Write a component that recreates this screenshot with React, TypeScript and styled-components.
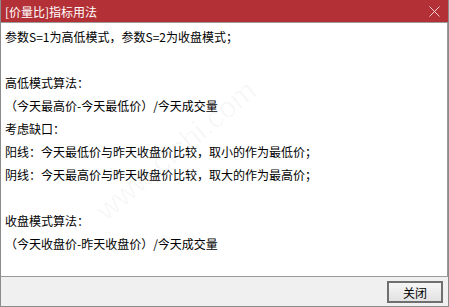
import React from "react";
import styled, { createGlobalStyle } from "styled-components";

const GlobalStyle = createGlobalStyle`
  html, body {
    margin: 0;
    padding: 0;
    background: #f0f0f0;
  }
  body {
    font-family: "Microsoft YaHei", "Noto Sans CJK SC", "Liberation Sans", sans-serif;
  }
`;

const Window = styled.div`
  width: 449px;
  height: 307px;
  box-sizing: border-box;
  display: flex;
  flex-direction: column;
  background: #f0f0f0;
  border-left: 1px solid #8c8c8c;
  border-right: 1px solid #8c8c8c;
  border-bottom: 1px solid #8c8c8c;
  overflow: hidden;
`;

const TitleBar = styled.div`
  height: 22px;
  flex: none;
  display: flex;
  align-items: center;
  justify-content: space-between;
  background: #b33036;
  color: #fff;
  font-size: 12px;
  padding: 0 9px 0 5px;
  margin: 0 -1px;
`;

const Content = styled.div`
  position: relative;
  flex: 1;
  background: #fff;
  border-top: 1px solid #9a9a9a;
  border-bottom: 1px solid #9a9a9a;
  border-right: 1px solid #9a9a9a;
  padding: 2px 4px 0;
  overflow: hidden;
`;

const Line = styled.div`
  height: 23px;
  line-height: 23px;
  font-size: 12px;
  color: #000;
  white-space: nowrap;
`;

const Watermark = styled.div`
  position: absolute;
  left: 110px;
  top: 170px;
  font-size: 30px;
  font-family: "Liberation Sans", sans-serif;
  color: rgba(0, 0, 0, 0.035);
  transform: rotate(-40deg);
  transform-origin: left bottom;
  pointer-events: none;
`;

const Footer = styled.div`
  height: 29px;
  flex: none;
  display: flex;
  align-items: center;
  justify-content: flex-end;
  padding-right: 5px;
`;

const Button = styled.button`
  width: 56px;
  height: 22px;
  box-sizing: border-box;
  border: 2px solid #6f6f6f;
  background: linear-gradient(#f6f6f6, #e2e2e2);
  font-family: inherit;
  font-size: 12px;
  color: #000;
  padding: 0;
  margin-top: 1px;
`;

const lines = [
  "参数S=1为高低模式，参数S=2为收盘模式；",
  "",
  "高低模式算法：",
  "（今天最高价-今天最低价）/今天成交量",
  "考虑缺口：",
  "阳线：今天最低价与昨天收盘价比较，取小的作为最低价；",
  "阴线：今天最高价与昨天收盘价比较，取大的作为最高价；",
  "",
  "收盘模式算法：",
  "（今天收盘价-昨天收盘价）/今天成交量",
];

const CloseIcon = () => (
  <svg width="11" height="11" viewBox="0 0 11 11">
    <path d="M0.5 0.5 L10.5 10.5 M10.5 0.5 L0.5 10.5" stroke="#f3d0d2" strokeWidth="1" />
  </svg>
);

export default function App() {
  return (
    <>
      <GlobalStyle />
      <Window>
        <TitleBar>
          <span>[价量比]指标用法</span>
          <CloseIcon />
        </TitleBar>
        <Content>
          {lines.map((t, i) => (
            <Line key={i}>{t || "\u00a0"}</Line>
          ))}
          <Watermark>www.cfchi.com</Watermark>
        </Content>
        <Footer>
          <Button>关闭</Button>
        </Footer>
      </Window>
    </>
  );
}
